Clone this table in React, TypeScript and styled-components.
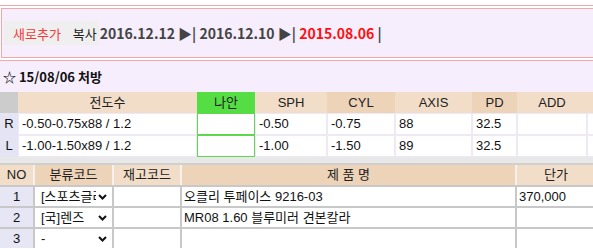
import React from "react";
import styled, { createGlobalStyle } from "styled-components";

const GlobalStyle = createGlobalStyle`
  html, body {
    margin: 0;
    padding: 0;
    background: #fff;
  }
  body {
    font-family: "Liberation Sans", "Noto Sans CJK KR", sans-serif;
    font-size: 13px;
    color: #222;
  }
`;

const LIGHT = "#f2ddc9";
const DARK = "#edd3b8";
const PINK = "#f4a7a8";
const LAVENDER = "#f6eefd";

const rxColumns = [
  { title: "", width: 18, tone: "gray" },
  { title: "전도수", width: 179, tone: "light" },
  { title: "나안", width: 58, tone: "green" },
  { title: "SPH", width: 72, tone: "light" },
  { title: "CYL", width: 68, tone: "dark" },
  { title: "AXIS", width: 77, tone: "light" },
  { title: "PD", width: 45, tone: "dark" },
  { title: "ADD", width: 70, tone: "light" },
  { title: "", width: 80, tone: "light" },
];

const rxRows = [
  { eye: "R", power: "-0.50-0.75x88 / 1.2", sph: "-0.50", cyl: "-0.75", axis: "88", pd: "32.5" },
  { eye: "L", power: "-1.00-1.50x89 / 1.2", sph: "-1.00", cyl: "-1.50", axis: "89", pd: "32.5" },
];

const itemColumns = [
  { title: "NO", width: 33, tone: "light" },
  { title: "분류코드", width: 77, tone: "dark" },
  { title: "재고코드", width: 66, tone: "light" },
  { title: "제 품 명", width: 333, tone: "dark" },
  { title: "단가", width: 78, tone: "light" },
];

const itemRows = [
  { no: 1, cat: "[스포츠글라스]", name: "오클리 투페이스 9216-03", price: "370,000" },
  { no: 2, cat: "[국]렌즈", name: "MR08 1.60 블루미러 견본칼라", price: "" },
  { no: 3, cat: "-", name: "", price: "" },
];

const toneColor = (tone: string) => {
  if (tone === "gray") return "#cccccc";
  if (tone === "green") return "#55dd44";
  if (tone === "dark") return DARK;
  return LIGHT;
};

const Chevron = () => (
  <svg width="9" height="6" viewBox="0 0 9 6">
    <path d="M1 1l3.5 3.5L8 1" fill="none" stroke="#111" strokeWidth="2" />
  </svg>
);

export default function App() {
  return (
    <Page>
      <GlobalStyle />
      <TopRule>
        <ActionBox>
          <Btn $red>새로추가</Btn>
          <Btn $copy>복사</Btn>
          <History>
            2016.12.12 ▶| 2016.12.10 ▶| <Current>2015.08.06</Current> |
          </History>
        </ActionBox>
      </TopRule>

      <Section>
        <Title>☆ 15/08/06 처방</Title>
        <Row>
          {rxColumns.map((c, i) => (
            <HeadCell key={i} $w={c.width} $bg={toneColor(c.tone)}>
              {c.title}
            </HeadCell>
          ))}
        </Row>
        {rxRows.map((r) => (
          <Row key={r.eye}>
            <EyeCell $w={18}>{r.eye}</EyeCell>
            <Cell $w={179}>{r.power}</Cell>
            <Cell $w={58} $green />
            <Cell $w={72}>{r.sph}</Cell>
            <Cell $w={68}>{r.cyl}</Cell>
            <Cell $w={77}>{r.axis}</Cell>
            <Cell $w={45}>{r.pd}</Cell>
            <Cell $w={70} />
            <Cell $w={80} />
          </Row>
        ))}
      </Section>

      <Divider />

      <ItemTable>
        <ItemHead>
          {itemColumns.map((c) => (
            <ItemHeadCell key={c.title} $w={c.width} $bg={toneColor(c.tone)}>
              {c.title}
            </ItemHeadCell>
          ))}
        </ItemHead>
        {itemRows.map((r) => (
          <ItemRow key={r.no}>
            <NoCell $w={33}>{r.no}</NoCell>
            <ItemCell $w={77}>
              <FakeSelect>
                <SelectText>{r.cat}</SelectText>
                <Chevron />
              </FakeSelect>
            </ItemCell>
            <ItemCell $w={66} />
            <ItemCell $w={333}>{r.name}</ItemCell>
            <ItemCell $w={78}>{r.price}</ItemCell>
          </ItemRow>
        ))}
      </ItemTable>
    </Page>
  );
}

const Page = styled.div`
  width: 593px;
  height: 249px;
  overflow: hidden;
`;

const TopRule = styled.div`
  margin-top: 5px;
  border-top: 1px solid ${PINK};
  padding-top: 2px;
`;

const ActionBox = styled.div`
  margin-left: 1px;
  height: 48px;
  width: 700px;
  border: 1px solid ${PINK};
  background: ${LAVENDER};
  display: flex;
  align-items: center;
  padding-left: 2px;
`;

const Btn = styled.span<{ $red?: boolean; $copy?: boolean }>`
  height: 24px;
  display: flex;
  align-items: center;
  background: #efefef;
  font-family: "Noto Sans CJK KR", sans-serif;
  font-size: 13px;
  color: ${(p) => (p.$red ? "#f23a3a" : "#222")};
  padding: ${(p) => (p.$copy ? "0 2px 0 6px" : "0 6px 0 9px")};
`;

const History = styled.span`
  margin-left: 1px;
  font-family: "Noto Sans CJK KR", sans-serif;
  font-weight: bold;
  font-size: 14px;
  color: #444;
  white-space: pre;
`;

const Current = styled.span`
  color: #ff1010;
`;

const Section = styled.div`
  margin-top: 2px;
  border-top: 1px solid ${PINK};
  background: ${LAVENDER};
  width: 700px;
`;

const Title = styled.div`
  height: 31px;
  display: flex;
  align-items: center;
  padding-left: 3px;
  font-family: "Noto Sans CJK KR", sans-serif;
  font-weight: bold;
  font-size: 13px;
  color: #111;
`;

const Row = styled.div`
  display: flex;
`;

const HeadCell = styled.div<{ $w: number; $bg: string }>`
  flex: 0 0 ${(p) => p.$w}px;
  height: 21px;
  line-height: 21px;
  background: ${(p) => p.$bg};
  text-align: center;
  color: #222;
`;

const Cell = styled.div<{ $w: number; $green?: boolean }>`
  box-sizing: border-box;
  flex: 0 0 ${(p) => p.$w}px;
  height: 22px;
  line-height: 20px;
  padding-left: 3px;
  background: #fff;
  border: 1px solid ${(p) => (p.$green ? "#5fd84f" : "#efe9f6")};
  color: #111;
`;

const EyeCell = styled(Cell)`
  background: #e4e4f4;
  border-color: #e4e4f4;
  text-align: center;
  padding-left: 0;
`;

const Divider = styled.div`
  height: 6px;
  background: #e8e8e8;
  border-bottom: 2px solid #cfcfcf;
`;

const ItemTable = styled.div`
  display: flex;
  flex-direction: column;
  gap: 2px;
  background: #c8c8c8;
`;

const ItemHead = styled.div`
  display: flex;
  gap: 2px;
  background: #f6f1ec;
`;

const ItemHeadCell = styled.div<{ $w: number; $bg: string }>`
  flex: 0 0 ${(p) => p.$w}px;
  height: 20px;
  line-height: 20px;
  text-align: center;
  background: ${(p) => p.$bg};
  color: #222;
`;

const ItemRow = styled.div`
  display: flex;
  gap: 2px;
`;

const ItemCell = styled.div<{ $w: number }>`
  flex: 0 0 ${(p) => p.$w}px;
  height: 19px;
  line-height: 19px;
  background: #fff;
  padding-left: 2px;
  box-sizing: border-box;
  white-space: nowrap;
  overflow: hidden;
  color: #111;
`;

const NoCell = styled(ItemCell)`
  background: #e6e6f5;
  text-align: center;
  padding-left: 0;
`;

const FakeSelect = styled.div`
  display: flex;
  align-items: center;
  height: 19px;
  padding: 0 5px 0 4px;
  gap: 2px;
`;

const SelectText = styled.span`
  flex: 1;
  overflow: hidden;
  white-space: nowrap;
`;
